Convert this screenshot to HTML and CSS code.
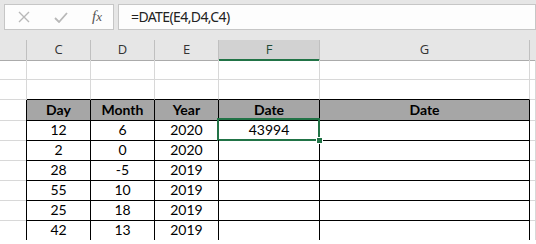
FILE: index.html
```html
<!DOCTYPE html>
<html>
<head>
  <title>DATE sheet</title>
  <link rel="stylesheet" href="styles.css">
</head>
<body>
  <div class="formula-bar">
    <div class="tools">
      <svg class="tool-x" width="12" height="12" viewBox="0 0 12 12">
        <path d="M1 1 L11 11 M11 1 L1 11" stroke="#b8b8b8" stroke-width="1.4" fill="none"/>
      </svg>
      <svg class="tool-check" width="14" height="11" viewBox="0 0 14 11">
        <path d="M1 6 L5 10 L13 1" stroke="#b8b8b8" stroke-width="1.8" fill="none"/>
      </svg>
      <span class="fx">f<span class="fx-x">x</span></span>
    </div>
    <div class="formula">=DATE(E4,D4,C4)</div>
  </div>

  <div class="sheet">
    <div class="row heads">
      <div class="cell rh"></div>
      <div class="cell ch">C</div>
      <div class="cell ch">D</div>
      <div class="cell ch">E</div>
      <div class="cell ch active">F</div>
      <div class="cell ch">G</div>
      <div class="cell ch last"></div>
    </div>

    <div class="row">
      <div class="cell rh"></div>
      <div class="cell"></div><div class="cell"></div><div class="cell"></div>
      <div class="cell"></div><div class="cell"></div><div class="cell"></div>
    </div>
    <div class="row above">
      <div class="cell rh"></div>
      <div class="cell"></div><div class="cell"></div><div class="cell"></div>
      <div class="cell"></div><div class="cell"></div><div class="cell edge"></div>
    </div>

    <div class="row tbl">
      <div class="cell rh"></div>
      <div class="cell th">Day</div>
      <div class="cell th">Month</div>
      <div class="cell th">Year</div>
      <div class="cell th">Date</div>
      <div class="cell th">Date</div>
      <div class="cell edge"></div>
    </div>
    <div class="row tbl">
      <div class="cell rh"></div>
      <div class="cell">12</div><div class="cell">6</div><div class="cell">2020</div>
      <div class="cell selected">43994<span class="handle"></span></div>
      <div class="cell"></div><div class="cell edge"></div>
    </div>
    <div class="row tbl">
      <div class="cell rh"></div>
      <div class="cell">2</div><div class="cell">0</div><div class="cell">2020</div>
      <div class="cell"></div><div class="cell"></div><div class="cell edge"></div>
    </div>
    <div class="row tbl">
      <div class="cell rh"></div>
      <div class="cell">28</div><div class="cell">-5</div><div class="cell">2019</div>
      <div class="cell"></div><div class="cell"></div><div class="cell edge"></div>
    </div>
    <div class="row tbl">
      <div class="cell rh"></div>
      <div class="cell">55</div><div class="cell">10</div><div class="cell">2019</div>
      <div class="cell"></div><div class="cell"></div><div class="cell edge"></div>
    </div>
    <div class="row tbl">
      <div class="cell rh"></div>
      <div class="cell">25</div><div class="cell">18</div><div class="cell">2019</div>
      <div class="cell"></div><div class="cell"></div><div class="cell edge"></div>
    </div>
    <div class="row tbl">
      <div class="cell rh"></div>
      <div class="cell">42</div><div class="cell">13</div><div class="cell">2019</div>
      <div class="cell"></div><div class="cell"></div><div class="cell edge"></div>
    </div>
  </div>
</body>
</html>
```

FILE: styles.css
```css
html, body {
  margin: 0;
  padding: 0;
  background: #fff;
  overflow: hidden;
}

/* formula bar */
.formula-bar {
  display: flex;
  gap: 4px;
  height: 40px;
  padding: 4px 0 0 4px;
  box-sizing: border-box;
  background: #e6e6e6;
}

.tools,
.formula {
  height: 26px;
  box-sizing: border-box;
  border: 1px solid #c6c6c6;
  background: #fdfdfd;
}

.tools {
  width: 110px;
  display: flex;
  align-items: center;
}

.tool-x {
  margin-left: 13px;
}

.tool-check {
  margin-left: 24px;
}

.fx {
  margin-left: 24px;
  font-family: "Liberation Serif", serif;
  font-style: italic;
  font-size: 15px;
  color: #555;
  margin-top: -2px;
}

.fx-x {
  font-size: 13px;
}

.formula {
  flex: 1;
  padding-left: 12px;
  font-family: "Noto Sans", sans-serif;
  font-size: 14px;
  letter-spacing: -0.6px;
  line-height: 24px;
  color: #222;
}

/* grid */
.row {
  display: grid;
  grid-template-columns: 27px 64px 64px 64px 101px 210px 1fr;
  height: 20px;
}

.cell {
  box-sizing: border-box;
  border-right: 1px solid #d8d8d8;
  border-bottom: 1px solid #d8d8d8;
  font-family: "Lato", sans-serif;
  font-size: 14px;
  color: #000;
  text-align: center;
  line-height: 20px;
  position: relative;
}

.heads .cell {
  background: #e6e6e6;
  border-bottom-color: #ababab;
  border-right-color: #c0c0c0;
  font-family: "Open Sans", sans-serif;
  font-size: 13px;
  color: #333;
  line-height: 19px;
}

.heads .ch.active {
  background: #d2d2d2;
  border-bottom: 2px solid #217346;
  color: #1f4a36;
}

.heads .ch.last {
  border-right: none;
}

/* bordered table */
.above .cell:not(.rh):not(.edge) {
  border-bottom-color: #000;
}

.tbl .cell {
  border-color: #000;
}

.tbl .rh {
  border-bottom-color: #d8d8d8;
}

.tbl .edge {
  border-right-color: #d8d8d8;
  border-bottom-color: #d8d8d8;
}

.th {
  background: #a6a6a6;
  font-weight: bold;
}

.selected::after {
  content: "";
  position: absolute;
  left: -2px;
  top: -2px;
  right: -1px;
  bottom: -1px;
  border: 2px solid #217346;
}

.handle {
  position: absolute;
  right: -4px;
  bottom: -4px;
  width: 5px;
  height: 5px;
  background: #217346;
  border: 1px solid #fff;
  z-index: 2;
}
```
